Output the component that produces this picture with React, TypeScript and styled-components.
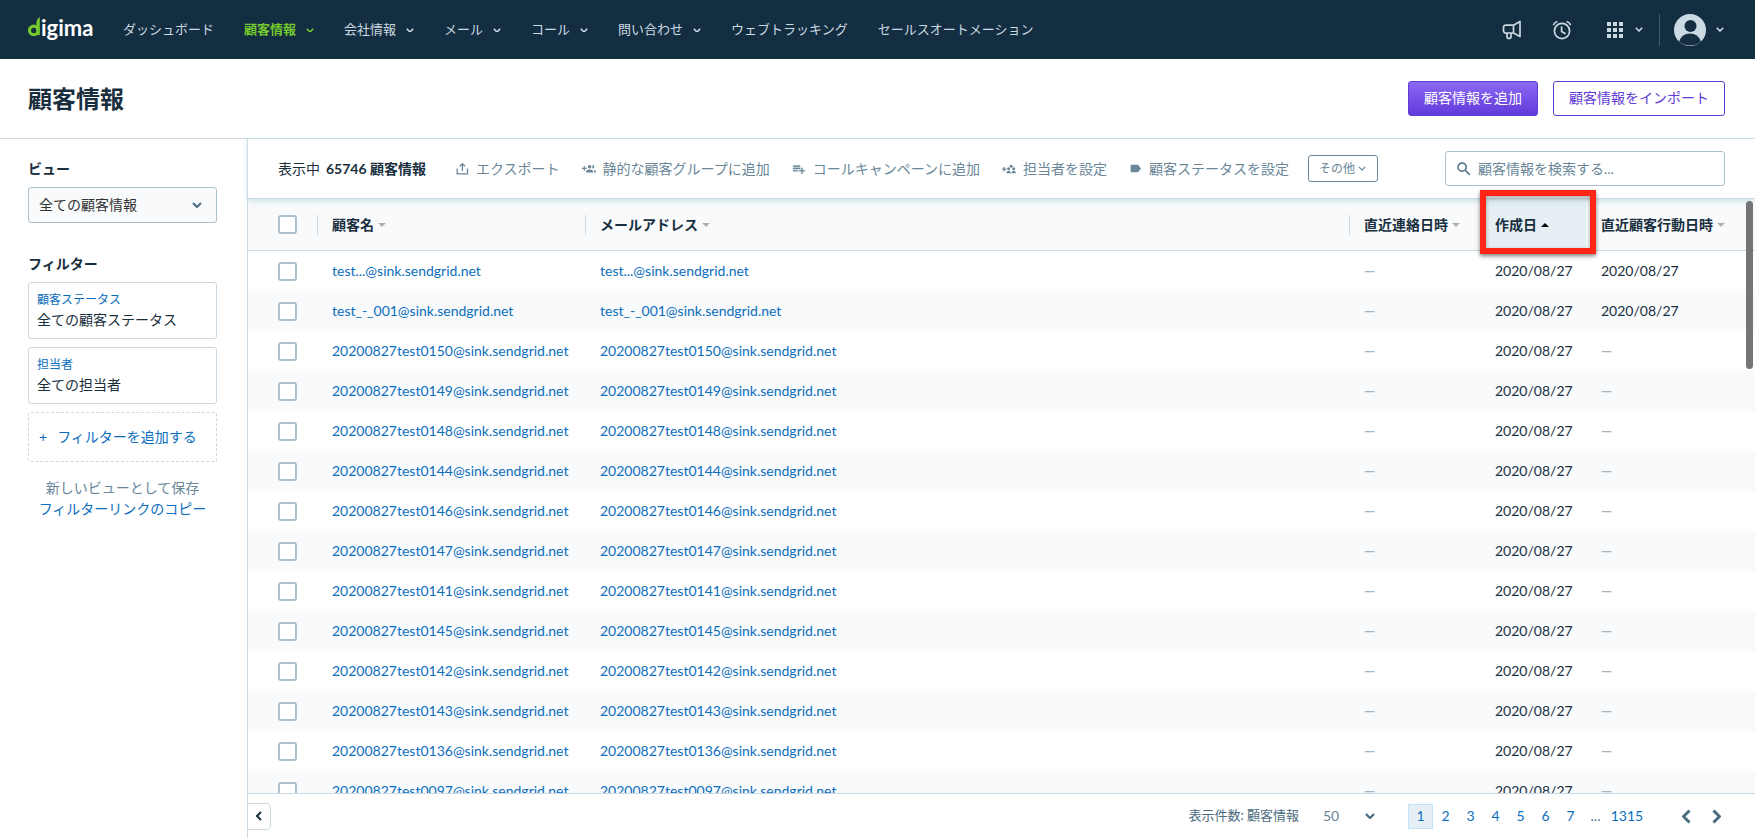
import React from 'react';
import styled, { createGlobalStyle, css } from 'styled-components';
import { MdLabel, MdSearch } from 'react-icons/md';

const c = {
  navy: '#142e41',
  navText: '#cbd9e2',
  text: '#192f3e',
  slate: '#6a8799',
  steel: '#4a6b80',
  line: '#cbd9e2',
  field: '#afc0cd',
  link: '#0c6ebd',
  stripe: '#f8fafc',
  tint: '#e6eff3',
  purple: '#5f3cd4',
  green: '#74c92c',
};

const GlobalStyle = createGlobalStyle`
  *, *::before, *::after { box-sizing: border-box; }
  html, body, #root { height: 100%; }
  body {
    margin: 0;
    background: #fff;
    color: ${c.text};
    font-family: Lato, "Noto Sans CJK JP", sans-serif;
    font-size: 14px;
    line-height: 20px;
  }
  button, input, select { font: inherit; color: inherit; margin: 0; }
  button { cursor: pointer; }
  a { color: ${c.link}; text-decoration: none; }
  svg { display: block; flex: none; }
`;

const Page = styled.div`
  height: 100vh;
  display: flex;
  flex-direction: column;
  overflow: hidden;
`;

const TopBar = styled.header`
  flex: none;
  height: 59px;
  padding: 0 31px 0 28px;
  display: flex;
  align-items: center;
  background: ${c.navy};
  color: ${c.navText};
`;

const Nav = styled.nav`
  display: flex;
  align-items: center;
  gap: 30px;
  margin-left: 29px;
  padding-bottom: 2px;
  font-size: 13px;
  white-space: nowrap;
`;

const NavItem = styled.a<{ $active?: boolean }>`
  display: flex;
  align-items: center;
  gap: 10px;
  color: ${p => (p.$active ? c.green : c.navText)};
  font-weight: ${p => (p.$active ? 700 : 400)};
  & > svg { margin-top: 3px; }
`;

const TopTools = styled.div`
  display: flex;
  align-items: center;
  margin-left: auto;
  gap: 30px;
`;

const BareButton = styled.button`
  display: flex;
  align-items: center;
  gap: 12px;
  padding: 0;
  border: 0;
  background: none;
`;

const AppsButton = styled(BareButton)`
  margin-left: 5px;
`;

const Account = styled.div`
  display: flex;
  height: 32px;
  align-items: center;
  margin-left: -14px;
  padding-left: 14px;
  border-left: 1px solid #3d5a70;
  & button { gap: 10px; }
`;

const TitleBar = styled.div`
  flex: none;
  height: 80px;
  padding: 0 30px 0 28px;
  display: flex;
  align-items: center;
  gap: 15px;
  border-bottom: 1px solid ${c.line};
`;

const Title = styled.h1`
  margin: 0 auto 0 0;
  font-size: 24px;
  line-height: 32px;
  font-weight: 700;
`;

const ActionButton = styled.button<{ $primary?: boolean }>`
  height: 35px;
  padding: 0 15px 2px;
  border: 1px solid ${c.purple};
  border-radius: 3px;
  background: #fff;
  color: ${c.purple};
  white-space: nowrap;
  ${p => p.$primary && css`
    background: linear-gradient(#8b68f3, #613bda);
    color: #fff;
  `}
`;

const Body = styled.div`
  flex: 1;
  min-height: 0;
  display: flex;
`;

const Sidebar = styled.aside`
  flex: none;
  width: 248px;
  padding: 20px 30px 0 28px;
  border-right: 1px solid ${c.line};
`;

const SideHeading = styled.h2`
  display: block;
  margin: 0 0 8px;
  font-size: 14px;
  line-height: 20px;
  font-weight: 700;
`;

const ViewPicker = styled.div`
  display: grid;
  align-items: center;
  margin-bottom: 31px;
  & > * { grid-area: 1 / 1; }
  & > svg { justify-self: end; margin-right: 15px; pointer-events: none; color: ${c.steel}; }
`;

const ViewSelect = styled.select`
  appearance: none;
  width: 100%;
  height: 36px;
  padding: 0 30px 0 10px;
  border: 1px solid ${c.field};
  border-radius: 3px;
  background: ${c.stripe};
  color: #333;
`;

const FilterCard = styled.button`
  display: flex;
  flex-direction: column;
  justify-content: center;
  width: 100%;
  height: 57px;
  margin-bottom: 8px;
  padding: 0 8px 2px;
  border: 1px solid ${c.line};
  border-radius: 3px;
  background: #fff;
  text-align: left;
`;

const FilterLabel = styled.span`
  font-size: 12px;
  color: ${c.link};
`;

const AddFilter = styled.button`
  display: flex;
  align-items: center;
  gap: 10px;
  width: 100%;
  height: 50px;
  padding: 0 10px;
  border: 1px dashed ${c.line};
  border-radius: 3px;
  background: #fff;
  color: ${c.link};
`;

const SideLinks = styled.div`
  display: flex;
  flex-direction: column;
  align-items: center;
  margin-top: 15px;
  white-space: nowrap;
`;

const SideLink = styled.a<{ $muted?: boolean }>`
  line-height: 21px;
  color: ${p => (p.$muted ? c.slate : c.link)};
`;

const Main = styled.main`
  flex: 1;
  min-width: 0;
  display: flex;
  flex-direction: column;
`;

const Toolbar = styled.div`
  flex: none;
  position: relative;
  z-index: 1;
  height: 60px;
  padding: 0 30px;
  display: flex;
  align-items: center;
  gap: 22px;
  border-bottom: 1px solid ${c.line};
  box-shadow: 0 2px 6px #cbdfe6;
  white-space: nowrap;
`;

const Count = styled.p`
  margin: 0 8px 0 0;
  & strong { margin-left: 6px; }
`;

const Tool = styled.button`
  display: flex;
  align-items: center;
  gap: 7px;
  padding: 0;
  border: 0;
  background: none;
  color: ${c.slate};
`;

const MoreButton = styled.button`
  display: flex;
  align-items: center;
  gap: 3px;
  height: 27px;
  padding: 0 11px 0 10px;
  margin-left: -3px;
  border: 1px solid ${c.slate};
  border-radius: 3px;
  background: #fff;
  color: ${c.slate};
  font-size: 12px;
`;

const Search = styled.label`
  display: flex;
  align-items: center;
  gap: 5px;
  width: 280px;
  height: 35px;
  margin-left: auto;
  padding: 0 9px;
  border: 1px solid ${c.field};
  border-radius: 3px;
  color: ${c.steel};
`;

const SearchInput = styled.input`
  flex: 1;
  min-width: 0;
  padding: 0;
  border: 0;
  outline: 0;
  background: none;
  &::placeholder { color: ${c.slate}; opacity: 1; }
`;

const TableArea = styled.div`
  position: relative;
  flex: 1;
  min-height: 0;
`;

const TableClip = styled.div`
  height: 100%;
  overflow: hidden;
`;

const Table = styled.table`
  width: 100%;
  table-layout: fixed;
  border-collapse: separate;
  border-spacing: 0;
`;

const HeadCell = styled.th<{ $w?: number; $line?: boolean; $sorted?: boolean }>`
  height: 52px;
  width: ${p => (p.$w ? `${p.$w}px` : 'auto')};
  padding: 0 0 0 15px;
  border-bottom: 1px solid ${c.line};
  background: ${p => (p.$sorted ? c.tint : c.stripe)};
  text-align: left;
  font-weight: 700;
  white-space: nowrap;
  &:first-child { padding-left: 30px; }
  ${p => p.$line && css`
    background: linear-gradient(${c.line}, ${c.line}) 0 50% / 1px 20px no-repeat ${c.stripe};
  `}
`;

const SortButton = styled.button`
  display: flex;
  align-items: center;
  gap: 4px;
  padding: 0;
  border: 0;
  background: none;
  font-weight: 700;
`;

const SortArrow = styled.span<{ $up?: boolean }>`
  margin-top: 1px;
  border: 4px solid transparent;
  ${p => p.$up
    ? css`border-top: 0; border-bottom-color: #000;`
    : css`border-bottom: 0; border-top-color: #b0b0b0;`}
`;

const Row = styled.tr`
  &:nth-child(even) { background: ${c.stripe}; }
`;

const Cell = styled.td`
  height: 40px;
  padding: 0 0 0 15px;
  white-space: nowrap;
  &:first-child { padding-left: 30px; }
`;

const Check = styled.input.attrs({ type: 'checkbox' })`
  display: block;
  appearance: none;
  width: 19px;
  height: 19px;
  margin: 0;
  border: 2px solid ${c.field};
  border-radius: 3px;
  background: #fff;
  &:checked { background: ${c.link}; }
`;

const Empty = styled.span`
  color: #a3b5c3;
  font-weight: 700;
`;

const Highlight = styled.div`
  position: absolute;
  z-index: 2;
  top: -9px;
  right: 159px;
  width: 116px;
  height: 64px;
  border: 6px solid #ff2617;
  box-shadow: 0 2px 4px rgba(0, 0, 0, 0.5), inset 0 2px 4px rgba(0, 0, 0, 0.35);
  pointer-events: none;
`;

const ScrollThumb = styled.div`
  position: absolute;
  z-index: 2;
  top: 2px;
  right: 2px;
  width: 7px;
  height: 168px;
  border-radius: 4px;
  background: #737577;
`;

const Footer = styled.footer`
  flex: none;
  height: 45px;
  padding-right: 34px;
  display: flex;
  align-items: center;
  border-top: 1px solid ${c.line};
  color: ${c.steel};
`;

const Collapse = styled.button`
  display: flex;
  align-items: center;
  justify-content: center;
  width: 23px;
  height: 27px;
  margin-right: auto;
  padding: 0;
  border: 1px solid ${c.line};
  border-left: 0;
  border-radius: 0 5px 5px 0;
  background: #fff;
  color: ${c.text};
`;

const PerPage = styled.label`
  display: flex;
  align-items: center;
  gap: 24px;
  font-size: 13px;
  & > span:first-child { padding-bottom: 3px; }
`;

const PerPageBox = styled.span`
  display: grid;
  align-items: center;
  width: 52px;
  font-size: 14px;
  & > * { grid-area: 1 / 1; }
  & > svg { justify-self: end; pointer-events: none; }
`;

const PerPageSelect = styled.select`
  appearance: none;
  border: 0;
  padding: 0;
  background: none;
  color: ${c.slate};
`;

const Pages = styled.nav`
  display: flex;
  align-items: center;
  margin-left: 33px;
`;

const PageLink = styled.a<{ $current?: boolean; $wide?: boolean }>`
  display: flex;
  align-items: center;
  justify-content: center;
  width: ${p => (p.$wide ? 38 : 25)}px;
  height: 25px;
  border: 1px solid ${p => (p.$current ? '#bfe3fa' : 'transparent')};
  background: ${p => (p.$current ? c.tint : 'none')};
`;

const Steps = styled.div`
  display: flex;
  gap: 21px;
  margin-left: 36px;
`;

const Chevron = ({ w = 8, dir = 'down', stroke = 2 }: { w?: number; dir?: 'down' | 'left' | 'right'; stroke?: number }) => {
  const down = dir === 'down';
  const d = { down: 'M1 1l4 4 4-4', left: 'M5 1L1 5l4 4', right: 'M1 1l4 4-4 4' }[dir];
  return (
    <svg width={w} height={down ? w * 0.6 : (w * 10) / 6} viewBox={down ? '0 0 10 6' : '0 0 6 10'} fill="none" stroke="currentColor" strokeWidth={stroke} aria-hidden="true">
      <path d={d} />
    </svg>
  );
};

const LogoLink = styled.a`
  display: block;
  width: 66px;
`;

const Logo = () => (
  <LogoLink href="#home" aria-label="digima">
    <svg width="66" height="28" viewBox="0 0 66 28" aria-hidden="true">
      <circle cx="5.8" cy="14.4" r="4.3" fill="none" stroke={c.green} strokeWidth="3.2" />
      <path d="M8.4 11V6Q8.600 3 11.800 1V18Q11.800 20.300 8.400 18.500Z" fill={c.green} />
      <text x="13" y="20" fill="#fff" fontFamily="Lato, sans-serif" fontWeight="700" fontSize="22">igima</text>
    </svg>
  </LogoLink>
);

const Megaphone = () => (
  <svg width="20" height="20" viewBox="0 0 20 20" fill="none" stroke="currentColor" strokeWidth="1.7" strokeLinejoin="round" aria-hidden="true">
    <path d="M11.500 5.200L18 1.500v15l-6.500-3.500H4A2.200 2.200 0 0 1 1.500 10.600V7.400A2.200 2.200 0 0 1 4 5.200zM11.500 5.200v7.600M5 13v3.500q0 2 2 2t2-2V13" />
  </svg>
);

const Alarm = () => (
  <svg width="20" height="20" viewBox="0 0 20 20" fill="none" stroke="currentColor" strokeWidth="1.7" strokeLinecap="round" aria-hidden="true">
    <circle cx="10" cy="11" r="7.600" />
    <path d="M9.600 7v4.600l3.400 2M1.700 4.500Q2.600 2.400 4.800 1.800M18.300 4.500Q17.400 2.400 15.200 1.800" />
  </svg>
);

const Grid = () => (
  <svg width="16" height="16" viewBox="0 0 16 16" fill="currentColor" aria-hidden="true">
    {[0, 6, 12].map(y => [0, 6, 12].map(x => <rect key={`${x}-${y}`} x={x} y={y} width="4" height="4" />))}
  </svg>
);

const Avatar = () => (
  <svg width="32" height="32" viewBox="0 0 32 32" aria-hidden="true">
    <circle cx="16" cy="16" r="16" fill={c.navText} />
    <circle cx="16.500" cy="12" r="6" fill={c.navy} />
    <path d="M5 27.500Q8 19.500 16 19.500T27 27.500Q22.500 31.500 16 31.500T5 27.500z" fill={c.navy} />
  </svg>
);

const Export = () => (
  <svg width="13" height="13" viewBox="0 0 13 13" fill="none" stroke="currentColor" strokeWidth="1.300" aria-hidden="true">
    <path d="M1.200 6.500v5.300h10.300V6.500M6.400 9V1.800M3.800 4.200l2.600-2.600L9 4.200" />
  </svg>
);

const GroupAdd = () => (
  <svg width="14" height="14" viewBox="0 0 24 24" fill="currentColor" aria-hidden="true">
    <path d="M8 10H5V7H3v3H0v2h3v3h2v-3h3v-2zm10 1c1.660 0 2.990-1.340 2.990-3S19.660 5 18 5c-.320 0-.630.050-.910.140.570.810.900 1.790.900 2.860s-.340 2.040-.900 2.860c.280.090.590.140.910.140zm-5 0c1.660 0 2.990-1.340 2.990-3S14.660 5 13 5c-1.660 0-3 1.340-3 3s1.340 3 3 3zm6.620 2.160c.830.730 1.380 1.660 1.380 2.840v2h3v-2c0-1.540-2.370-2.490-4.380-2.840zM13 13c-2 0-6 1-6 3v2h12v-2c0-2-4-3-6-3z" />
  </svg>
);

const ListAdd = () => (
  <svg width="14" height="14" viewBox="0 0 24 24" fill="currentColor" stroke="currentColor" strokeWidth="0.6" aria-hidden="true">
    <path d="M14 10H2v2h12v-2zm0-4H2v2h12V6zm4 8v-4h-2v4h-4v2h4v4h2v-4h4v-2h-4zM2 16h8v-2H2v2z" />
  </svg>
);

const AssignGroup = () => (
  <svg width="14" height="12" viewBox="0 0 14 12" fill="currentColor" aria-hidden="true">
    <path d="M0 5.600h1.600V4h1.200v1.600h1.600v1.200H2.800v1.600H1.600V6.800H0zM4.300 10.200Q4.300 7.700 6.700 7.700T9.100 10.200zM9.500 10.200Q9.500 7.700 11.700 7.700T14 10.200z" />
    <circle cx="6.600" cy="5.800" r="1.500" /><circle cx="11.700" cy="5.800" r="1.500" /><circle cx="9.200" cy="3.200" r="1.500" />
  </svg>
);

const navItems = [
  { label: 'ダッシュボード' },
  { label: '顧客情報', menu: true, active: true },
  { label: '会社情報', menu: true },
  { label: 'メール', menu: true },
  { label: 'コール', menu: true },
  { label: '問い合わせ', menu: true },
  { label: 'ウェブトラッキング' },
  { label: 'セールスオートメーション' },
];

const tools = [
  { label: 'エクスポート', icon: <Export /> },
  { label: '静的な顧客グループに追加', icon: <GroupAdd /> },
  { label: 'コールキャンペーンに追加', icon: <ListAdd /> },
  { label: '担当者を設定', icon: <AssignGroup /> },
  { label: '顧客ステータスを設定', icon: <MdLabel size={13} /> },
];

const names = [
  'test...', 'test_-_001',
  ...['0150', '0149', '0148', '0144', '0146', '0147', '0141', '0145', '0142', '0143', '0136', '0097'].map(n => `20200827test${n}`),
];

const customers = names.map((name, i) => ({
  email: `${name}@sink.sendgrid.net`,
  created: '2020/08/27',
  action: i < 2 ? '2020/08/27' : null,
}));

const Sortable = ({ children, up }: { children: React.ReactNode; up?: boolean }) => (
  <SortButton>{children}<SortArrow $up={up} /></SortButton>
);

export default function App() {
  return (
    <Page>
      <GlobalStyle />
      <TopBar>
        <Logo />
        <Nav>
          {navItems.map(item => (
            <NavItem key={item.label} href="#nav" $active={item.active}>
              {item.label}{item.menu && <Chevron />}
            </NavItem>
          ))}
        </Nav>
        <TopTools>
          <BareButton aria-label="お知らせ"><Megaphone /></BareButton>
          <BareButton aria-label="リマインダー"><Alarm /></BareButton>
          <AppsButton aria-label="アプリ"><Grid /><Chevron /></AppsButton>
          <Account>
            <BareButton aria-label="アカウント"><Avatar /><Chevron /></BareButton>
          </Account>
        </TopTools>
      </TopBar>

      <TitleBar>
        <Title>顧客情報</Title>
        <ActionButton $primary>顧客情報を追加</ActionButton>
        <ActionButton>顧客情報をインポート</ActionButton>
      </TitleBar>

      <Body>
        <Sidebar>
          <SideHeading as="label" htmlFor="view">ビュー</SideHeading>
          <ViewPicker>
            <ViewSelect id="view"><option>全ての顧客情報</option></ViewSelect>
            <Chevron w={10} />
          </ViewPicker>
          <SideHeading>フィルター</SideHeading>
          <FilterCard><FilterLabel>顧客ステータス</FilterLabel>全ての顧客ステータス</FilterCard>
          <FilterCard><FilterLabel>担当者</FilterLabel>全ての担当者</FilterCard>
          <AddFilter><span>+</span>フィルターを追加する</AddFilter>
          <SideLinks>
            <SideLink href="#save" $muted>新しいビューとして保存</SideLink>
            <SideLink href="#copy">フィルターリンクのコピー</SideLink>
          </SideLinks>
        </Sidebar>

        <Main>
          <Toolbar>
            <Count>表示中<strong>65746 顧客情報</strong></Count>
            {tools.map(t => <Tool key={t.label}>{t.icon}{t.label}</Tool>)}
            <MoreButton>その他<Chevron stroke={1.5} /></MoreButton>
            <Search>
              <MdSearch size={18} />
              <SearchInput aria-label="検索" placeholder="顧客情報を検索する..." />
            </Search>
          </Toolbar>

          <TableArea>
            <TableClip>
              <Table>
                <thead>
                  <tr>
                    <HeadCell $w={69}><Check aria-label="全て選択" /></HeadCell>
                    <HeadCell $w={268} $line><Sortable>顧客名</Sortable></HeadCell>
                    <HeadCell $line><Sortable>メールアドレス</Sortable></HeadCell>
                    <HeadCell $w={131} $line><Sortable>直近連絡日時</Sortable></HeadCell>
                    <HeadCell $w={106} $sorted><Sortable up>作成日</Sortable></HeadCell>
                    <HeadCell $w={169}><Sortable>直近顧客行動日時</Sortable></HeadCell>
                  </tr>
                </thead>
                <tbody>
                  {customers.map(r => (
                    <Row key={r.email}>
                      <Cell><Check aria-label={r.email} /></Cell>
                      <Cell><a href="#customer">{r.email}</a></Cell>
                      <Cell><a href="#mail">{r.email}</a></Cell>
                      <Cell><Empty>—</Empty></Cell>
                      <Cell>{r.created}</Cell>
                      <Cell>{r.action ?? <Empty>—</Empty>}</Cell>
                    </Row>
                  ))}
                </tbody>
              </Table>
            </TableClip>
            <Highlight />
            <ScrollThumb />
          </TableArea>

          <Footer>
            <Collapse aria-label="サイドバーを閉じる"><Chevron w={6} dir="left" /></Collapse>
            <PerPage>
              <span>表示件数: 顧客情報</span>
              <PerPageBox>
                <PerPageSelect><option>50</option></PerPageSelect>
                <Chevron w={10} stroke={2.2} />
              </PerPageBox>
            </PerPage>
            <Pages aria-label="ページ">
              {[1, 2, 3, 4, 5, 6, 7].map(n => <PageLink key={n} href="#page" $current={n === 1}>{n}</PageLink>)}
              <PageLink as="span">...</PageLink>
              <PageLink href="#page" $wide>1315</PageLink>
            </Pages>
            <Steps>
              <BareButton aria-label="前へ"><Chevron w={9} dir="left" stroke={2} /></BareButton>
              <BareButton aria-label="次へ"><Chevron w={9} dir="right" stroke={2} /></BareButton>
            </Steps>
          </Footer>
        </Main>
      </Body>
    </Page>
  );
}
